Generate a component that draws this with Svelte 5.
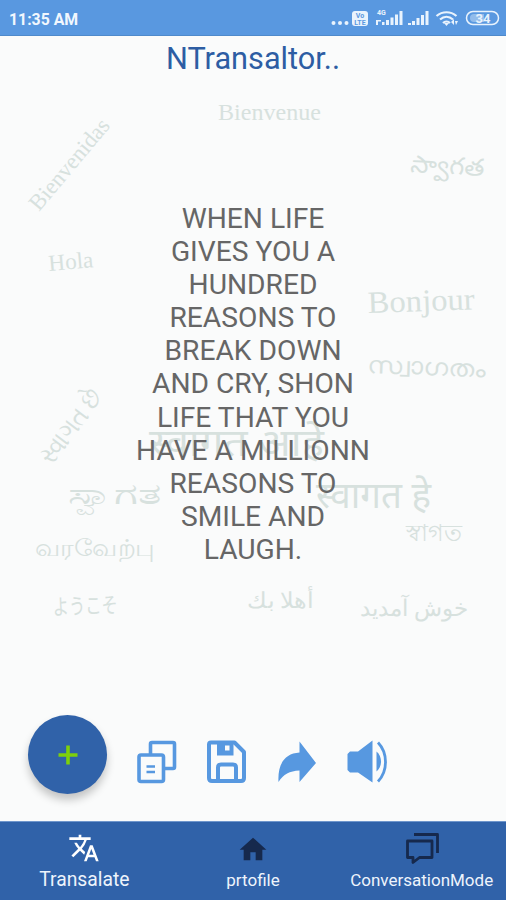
<script lang="ts">
  // Greeting words scattered behind the quote; x/y is the left end of the baseline
  const greetings = [
    { text: 'Bienvenue', x: 218, y: 119.5, size: 23, width: 103, family: 'serif' },
    { text: 'Bienvenidas', x: 39, y: 212, size: 23, width: 112, rotate: -50, family: 'serif' },
    { text: 'స్వాగత', x: 410, y: 172, size: 24, width: 74, rotate: 3 },
    { text: 'Hola', x: 49, y: 271, size: 23, width: 45, rotate: -5, family: 'serif' },
    { text: 'Bonjour', x: 368, y: 313, size: 31, width: 107, rotate: -2, family: 'serif' },
    { text: 'സ്വാഗതം', x: 367, y: 373, size: 24, width: 118, rotate: 2 },
    { text: 'સ્વાગત છે', x: 52, y: 466, size: 27, width: 86, rotate: -53 },
    { text: 'स्वागत आहे', x: 149, y: 456, size: 38, width: 175 },
    { text: 'ಸ್ವಾಗತ', x: 68, y: 504, size: 29, width: 93 },
    { text: 'स्वागत हे', x: 316, y: 508, size: 37, width: 115 },
    { text: 'স্বাগত', x: 406, y: 541, size: 24, width: 56 },
    { text: 'வரவேற்பு', x: 35, y: 556, size: 24, width: 120 },
    { text: 'ようこそ', x: 53, y: 615, size: 22, width: 65, rotate: -2 },
    { text: 'أهلا بك', x: 247, y: 608, size: 22, width: 67 },
    { text: 'خوش آمدید', x: 360, y: 616, size: 23, width: 108 },
  ];

  const quote = [
    'WHEN LIFE',
    'GIVES YOU A',
    'HUNDRED',
    'REASONS TO',
    'BREAK DOWN',
    'AND CRY, SHON',
    'LIFE THAT YOU',
    'HAVE A MILLIONN',
    'REASONS TO',
    'SMILE AND',
    'LAUGH.',
  ];
</script>

<div class="screen">
  <header class="status-bar">
    <span class="clock">11:35 AM</span>
    <svg class="indicators" width="176" height="36" viewBox="0 0 176 36" fill="#e9f3fd">
      <circle cx="3.5" cy="23" r="2" />
      <circle cx="10" cy="23" r="2" />
      <circle cx="16.5" cy="23" r="2" />
      <rect x="22" y="11" width="16" height="15" rx="3" />
      <text x="30" y="18" class="volte">Vo</text>
      <text x="30" y="25" class="volte">LTE</text>
      <text x="47" y="15" class="network">4G</text>
      <path d="M46 20h5v1.500h-3V25H46zM52 22h2.500v3H52zM56 20h3v5h-3zM60.500 17.500h3v7.500h-3zM65 14.500h3v10.500h-3zM69.500 11h3v14h-3z" />
      <path d="M78 23h3v2h-3zM82 21h3v4h-3zM86.500 18h3v7h-3zM91 15h3v10h-3zM95.500 11h3v14h-3z" />
      <g fill="none" stroke="#e9f3fd" stroke-width="2.200">
        <path d="M106.500 16c6-5 14-5 20 0" />
        <path d="M110 19.500c4-3.500 9-3.500 13 0" />
        <path d="M113 23c2-2 5-2 7 0" />
      </g>
      <path d="M114 23h5l-2.500 3z" />
      <path d="M121 22l3-3v6zM125 21h3l-2 4z" />
      <rect x="136.500" y="11.500" width="32" height="13" rx="6.500" fill="none" stroke="#e9f3fd" stroke-width="1.500" />
      <path d="M144 14h10v8h-10a4 4 0 0 1 0-8z" opacity="0.400" />
      <text x="153" y="22.500" class="battery">34</text>
    </svg>
  </header>

  <main>
    <svg class="greetings" width="506" height="785" viewBox="0 36 506 785" aria-hidden="true">
      {#each greetings as word}
        <text
          x={word.x}
          y={word.y}
          font-size={word.size}
          textLength={word.width}
          lengthAdjust="spacingAndGlyphs"
          class:serif={word.family === 'serif'}
          transform={word.rotate ? `rotate(${word.rotate} ${word.x} ${word.y})` : undefined}
        >{word.text}</text>
      {/each}
    </svg>

    <h1>NTransaltor..</h1>

    <p class="quote">
      {#each quote as line}
        <span>{line}</span>
      {/each}
    </p>

    <div class="actions">
      <button class="add" aria-label="Add">
        <svg width="20" height="20" viewBox="0 0 20 20">
          <path d="M10 0.500v19M0.500 10h19" stroke="#7ed00b" stroke-width="3.600" />
        </svg>
      </button>
      <button class="action" aria-label="Copy">
        <svg width="40" height="44" viewBox="0 0 40 44" fill="none" stroke="#5798e0" stroke-width="3.600" stroke-linejoin="round">
          <path d="M13.500 14V4q0-1.500 1.500-1.500h21q1.500 0 1.500 1.500v23q0 1.500-1.500 1.500H28" />
          <rect x="2" y="15" width="24.500" height="26.500" rx="2" />
          <path d="M9.500 26.500h8.500M9.500 32h8.500" stroke-width="2.400" />
        </svg>
      </button>
      <button class="action" aria-label="Save">
        <svg width="40" height="44" viewBox="0 0 40 44">
          <path
            d="M4 2.500h23.500l9.500 9.500v26q0 3-3 3H5q-3 0-3-3V4.500q0-2 2-2z"
            fill="none"
            stroke="#5798e0"
            stroke-width="4"
            stroke-linejoin="round"
          />
          <path d="M10 2h16.500v13.500H10zM18 5.500v5h4.500v-5z" fill="#5798e0" fill-rule="evenodd" />
          <path d="M11 41V27.500q0-3 3-3h12q3 0 3 3V41" fill="none" stroke="#5798e0" stroke-width="4" />
        </svg>
      </button>
      <button class="action" aria-label="Share">
        <svg width="40" height="44" viewBox="0 0 40 44" fill="#5798e0">
          <path d="M22.500 1.500L39 23 22.500 42V30.500C12.500 31 6.500 34 1.500 42 0.500 25 7 13.500 22.500 12.500z" />
        </svg>
      </button>
      <button class="action" aria-label="Speak">
        <svg width="40" height="44" viewBox="0 0 40 44" fill="#5798e0">
          <path d="M3 11.500h8L25.500 0.500v42L11 32.500H3L0.500 30V14z" />
          <path d="M29.500 11.500c6 5 6 15 0 20z" />
          <path d="M31 2.500C41 13 41 31 31 41.500" fill="none" stroke="#5798e0" stroke-width="2.800" />
        </svg>
      </button>
    </div>
  </main>

  <nav>
    <a class="tab active" href="#translate">
      <svg width="32" height="32" viewBox="0 0 24 24" fill="#fff">
        <path d="M12.870 15.070l-2.540-2.510.03-.03A17.520 17.520 0 0 0 14.070 6H17V4h-7V2H8v2H1v2h11.170C11.500 7.920 10.440 9.750 9 11.350 8.070 10.320 7.300 9.190 6.690 8h-2c.73 1.630 1.730 3.170 2.980 4.560l-5.090 5.020L4 19l5-5 3.110 3.110.76-2.040zM18.500 10h-2L12 22h2l1.120-3h4.750L21 22h2l-4.500-12zm-2.620 7l1.620-4.330L19.120 17h-3.240z" />
      </svg>
      <span>Transalate</span>
    </a>
    <a class="tab" href="#profile">
      <svg width="32" height="32" viewBox="0 0 24 24" fill="#16294d">
        <path d="M10 20.500v-6h4v6h5v-8h3L12 3.500 2 12.500h3v8z" />
      </svg>
      <span>prtofile</span>
    </a>
    <a class="tab" href="#conversation">
      <svg width="36" height="34" viewBox="0 0 36 34" fill="none" stroke="#16294d" stroke-width="2.800" stroke-linejoin="round">
        <path d="M3.500 9H28v16.500H15.500L9 30.500v-5H3.500z" />
        <path d="M10 2.500h23.500v18.500" />
      </svg>
      <span>ConversationMode</span>
    </a>
  </nav>
</div>

<style>
  :global(body) {
    margin: 0;
  }
  .screen {
    width: 506px;
    height: 900px;
    display: flex;
    flex-direction: column;
    overflow: hidden;
    background: #fafbfb;
    font-family: Roboto, 'Noto Sans', sans-serif;
  }
  .status-bar {
    box-sizing: border-box;
    height: 36px;
    flex: none;
    display: flex;
    align-items: center;
    justify-content: space-between;
    padding-left: 9px;
    background: #5998e0;
    border-bottom: 1px solid #4f8acb;
  }
  .clock {
    margin-top: 3px;
    color: #f1f7fe;
    font-size: 15.800px;
    font-weight: 700;
  }
  .volte {
    fill: #5998e0;
    font-size: 7px;
    font-weight: 700;
    text-anchor: middle;
  }
  .network {
    font-size: 7px;
    font-weight: 700;
  }
  .battery {
    font-size: 13px;
    font-weight: 700;
    text-anchor: middle;
  }
  main {
    position: relative;
    flex: 1;
    display: flex;
    flex-direction: column;
  }
  .greetings {
    position: absolute;
    top: 0;
    left: 0;
    fill: #d7e1de;
    font-family: 'Noto Sans', 'Noto Sans CJK JP', sans-serif;
  }
  .serif {
    font-family: 'Liberation Serif', serif;
  }
  h1 {
    position: relative;
    margin: 5px 0 0;
    color: #2d5da3;
    font-size: 30.700px;
    font-weight: 400;
    line-height: 36px;
    text-align: center;
  }
  .quote {
    position: relative;
    display: flex;
    flex-direction: column;
    align-items: center;
    margin: 125px 0 0;
    color: #666;
    font-size: 28.200px;
    line-height: 33.100px;
  }
  .actions {
    position: relative;
    display: flex;
    align-items: center;
    gap: 30px;
    margin: 149px 0 0 28px;
  }
  button {
    display: flex;
    align-items: center;
    justify-content: center;
    padding: 0;
    border: none;
    background: none;
  }
  .add {
    width: 79px;
    height: 79px;
    border-radius: 50%;
    background: #3062a9;
    box-shadow: 0 6px 9px rgba(0, 0, 0, 0.220);
  }
  .action {
    margin-top: 14px;
  }
  nav {
    box-sizing: border-box;
    height: 79px;
    flex: none;
    display: flex;
    background: #3062a9;
    border-top: 1px solid #6f96cc;
  }
  .tab {
    flex: 1;
    display: flex;
    flex-direction: column;
    align-items: center;
    color: #eef4fc;
    font-size: 17px;
    text-decoration: none;
  }
  .tab svg {
    height: 34px;
    margin-top: 10px;
  }
  .tab span {
    margin-top: 4px;
  }
  .active {
    font-size: 19.300px;
  }
  .active svg {
    margin-top: 9px;
  }
  .active span {
    margin-top: 3px;
  }
</style>
